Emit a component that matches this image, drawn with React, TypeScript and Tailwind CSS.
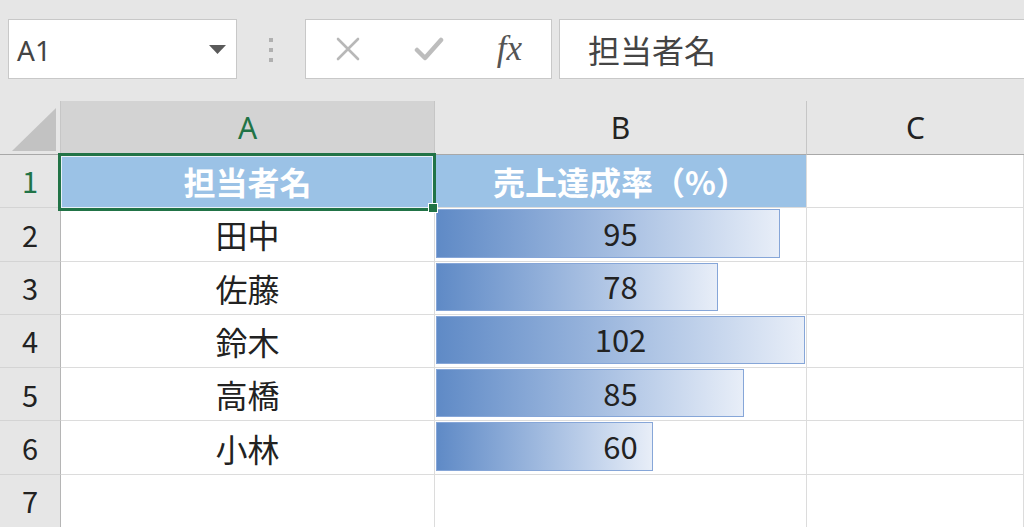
import React from "react";

const rows = [
  { name: "田中", rate: 95 },
  { name: "佐藤", rate: 78 },
  { name: "鈴木", rate: 102 },
  { name: "高橋", rate: 85 },
  { name: "小林", rate: 60 },
];

const jp = "font-['Noto_Sans_CJK_JP','Noto_Sans',sans-serif]";
const latin = "font-['Noto_Sans','Liberation_Sans',sans-serif]";

const rowHead =
  "flex items-center justify-center border-r border-b border-r-[#b5b5b5] border-b-[#d4d4d4] bg-[#e6e6e6] text-[29px] text-[#222]";
const cell = "border-r border-b border-[#dcdcdc] bg-white";

const TopBar = () => (
  <div className="flex h-[101px] items-start bg-[#e6e6e6] pl-2 pt-[19px]">
    {/* name box */}
    <div className={`flex h-[60px] w-[229px] items-center justify-between border border-[#c8c8c8] bg-white pl-2 pr-[10px] ${latin}`}>
      <span className="pt-[2px] text-[28px] text-[#444]">A1</span>
      <svg width="17" height="9" viewBox="0 0 17 9">
        <polygon points="0,0 17,0 8.5,9" fill="#5a5a5a" />
      </svg>
    </div>

    {/* splitter dots */}
    <div className="flex w-[68px] flex-col items-center gap-[6px] pt-[19px]">
      <span className="h-[4px] w-[4px] bg-[#b0b0b0]" />
      <span className="h-[4px] w-[4px] bg-[#b0b0b0]" />
      <span className="h-[4px] w-[4px] bg-[#b0b0b0]" />
    </div>

    {/* formula buttons */}
    <div className="flex h-[60px] w-[247px] items-center border border-[#c8c8c8] bg-white">
      <div className="flex w-[84px] justify-center">
        <svg width="26" height="26" viewBox="0 0 26 26">
          <path d="M3 3 L23 23 M23 3 L3 23" stroke="#b8b8b8" strokeWidth="2.6" strokeLinecap="round" />
        </svg>
      </div>
      <div className="flex w-[78px] justify-center">
        <svg width="30" height="26" viewBox="0 0 30 26">
          <path d="M3 14 L11 22 L27 4" stroke="#bdbdbd" strokeWidth="4.5" fill="none" strokeLinecap="round" strokeLinejoin="round" />
        </svg>
      </div>
      <div className="flex flex-1 justify-center">
        <span className="font-['Liberation_Serif',serif] text-[35px] italic text-[#555]">fx</span>
      </div>
    </div>

    {/* formula input */}
    <div className={`ml-[7px] flex h-[60px] flex-1 items-center border border-r-0 border-[#c8c8c8] bg-white pl-[28px] ${jp}`}>
      <span className="text-[32px] text-[#444]">担当者名</span>
    </div>
  </div>
);

export default function App() {
  return (
    <div className="h-[527px] w-[1024px] overflow-hidden bg-white">
      <TopBar />

      <div className={`relative grid grid-cols-[61px_374px_372px_1fr] grid-rows-[54px_repeat(7,53.3px)] ${jp}`}>
        {/* column headers */}
        <div className="flex items-end justify-end border-r border-b border-r-[#c6c6c6] border-b-[#a8a8a8] bg-[#e6e6e6] pr-[4px] pb-[3px]">
          <svg width="44" height="43" viewBox="0 0 44 43">
            <polygon points="44,0 44,43 0,43" fill="#c2c2c2" />
          </svg>
        </div>
        <div className={`flex items-center justify-center border-r border-b border-r-[#c6c6c6] border-b-[#a8a8a8] bg-[#d3d3d3] text-[30px] text-[#217346] ${latin}`}>
          A
        </div>
        <div className={`flex items-center justify-center border-r border-b border-r-[#c6c6c6] border-b-[#a8a8a8] bg-[#e6e6e6] text-[30px] text-[#222] ${latin}`}>
          B
        </div>
        <div className={`flex items-center justify-center border-b border-b-[#a8a8a8] bg-[#e6e6e6] text-[30px] text-[#222] ${latin}`}>
          C
        </div>

        {/* row 1 */}
        <div className={`${rowHead} bg-[#d3d3d3] text-[#217346]`}>1</div>
        <div className="flex items-center justify-center border-r border-b border-[#dcdcdc] bg-[#9bc2e6] text-[32px] font-bold text-white">
          担当者名
        </div>
        <div className="flex items-center justify-center border-r border-b border-[#dcdcdc] bg-[#9bc2e6] text-[32px] font-bold text-white">
          売上達成率（%）
        </div>
        <div className={cell} />

        {rows.map((r, i) => (
          <React.Fragment key={r.name}>
            <div className={rowHead}>{i + 2}</div>
            <div className={`${cell} flex items-center justify-center text-[32px] text-[#222]`}>{r.name}</div>
            <div className={`${cell} relative flex items-center justify-center text-[31px] text-[#222]`}>
              <div
                className="absolute top-[1px] bottom-[3px] left-[1px] border border-[#86a6d8] bg-gradient-to-r from-[#5f8ac6] to-[#e8eef8]"
                style={{ width: r.rate * 3.62 }}
              />
              <span className="relative -mt-[3px]">{r.rate}</span>
            </div>
            <div className={cell} />
          </React.Fragment>
        ))}

        {/* row 7 */}
        <div className={rowHead}>7</div>
        <div className={cell} />
        <div className={cell} />
        <div className={cell} />

        {/* active cell selection */}
        <div className="pointer-events-none absolute top-[52px] left-[58px] h-[58px] w-[378px] border-[3px] border-[#217346]">
          <div className="h-full w-full border border-[#e8f0f8]" />
        </div>
        <div className="absolute top-[102px] left-[428px] h-[10px] w-[10px] border border-white bg-[#217346]" />
      </div>
    </div>
  );
}
